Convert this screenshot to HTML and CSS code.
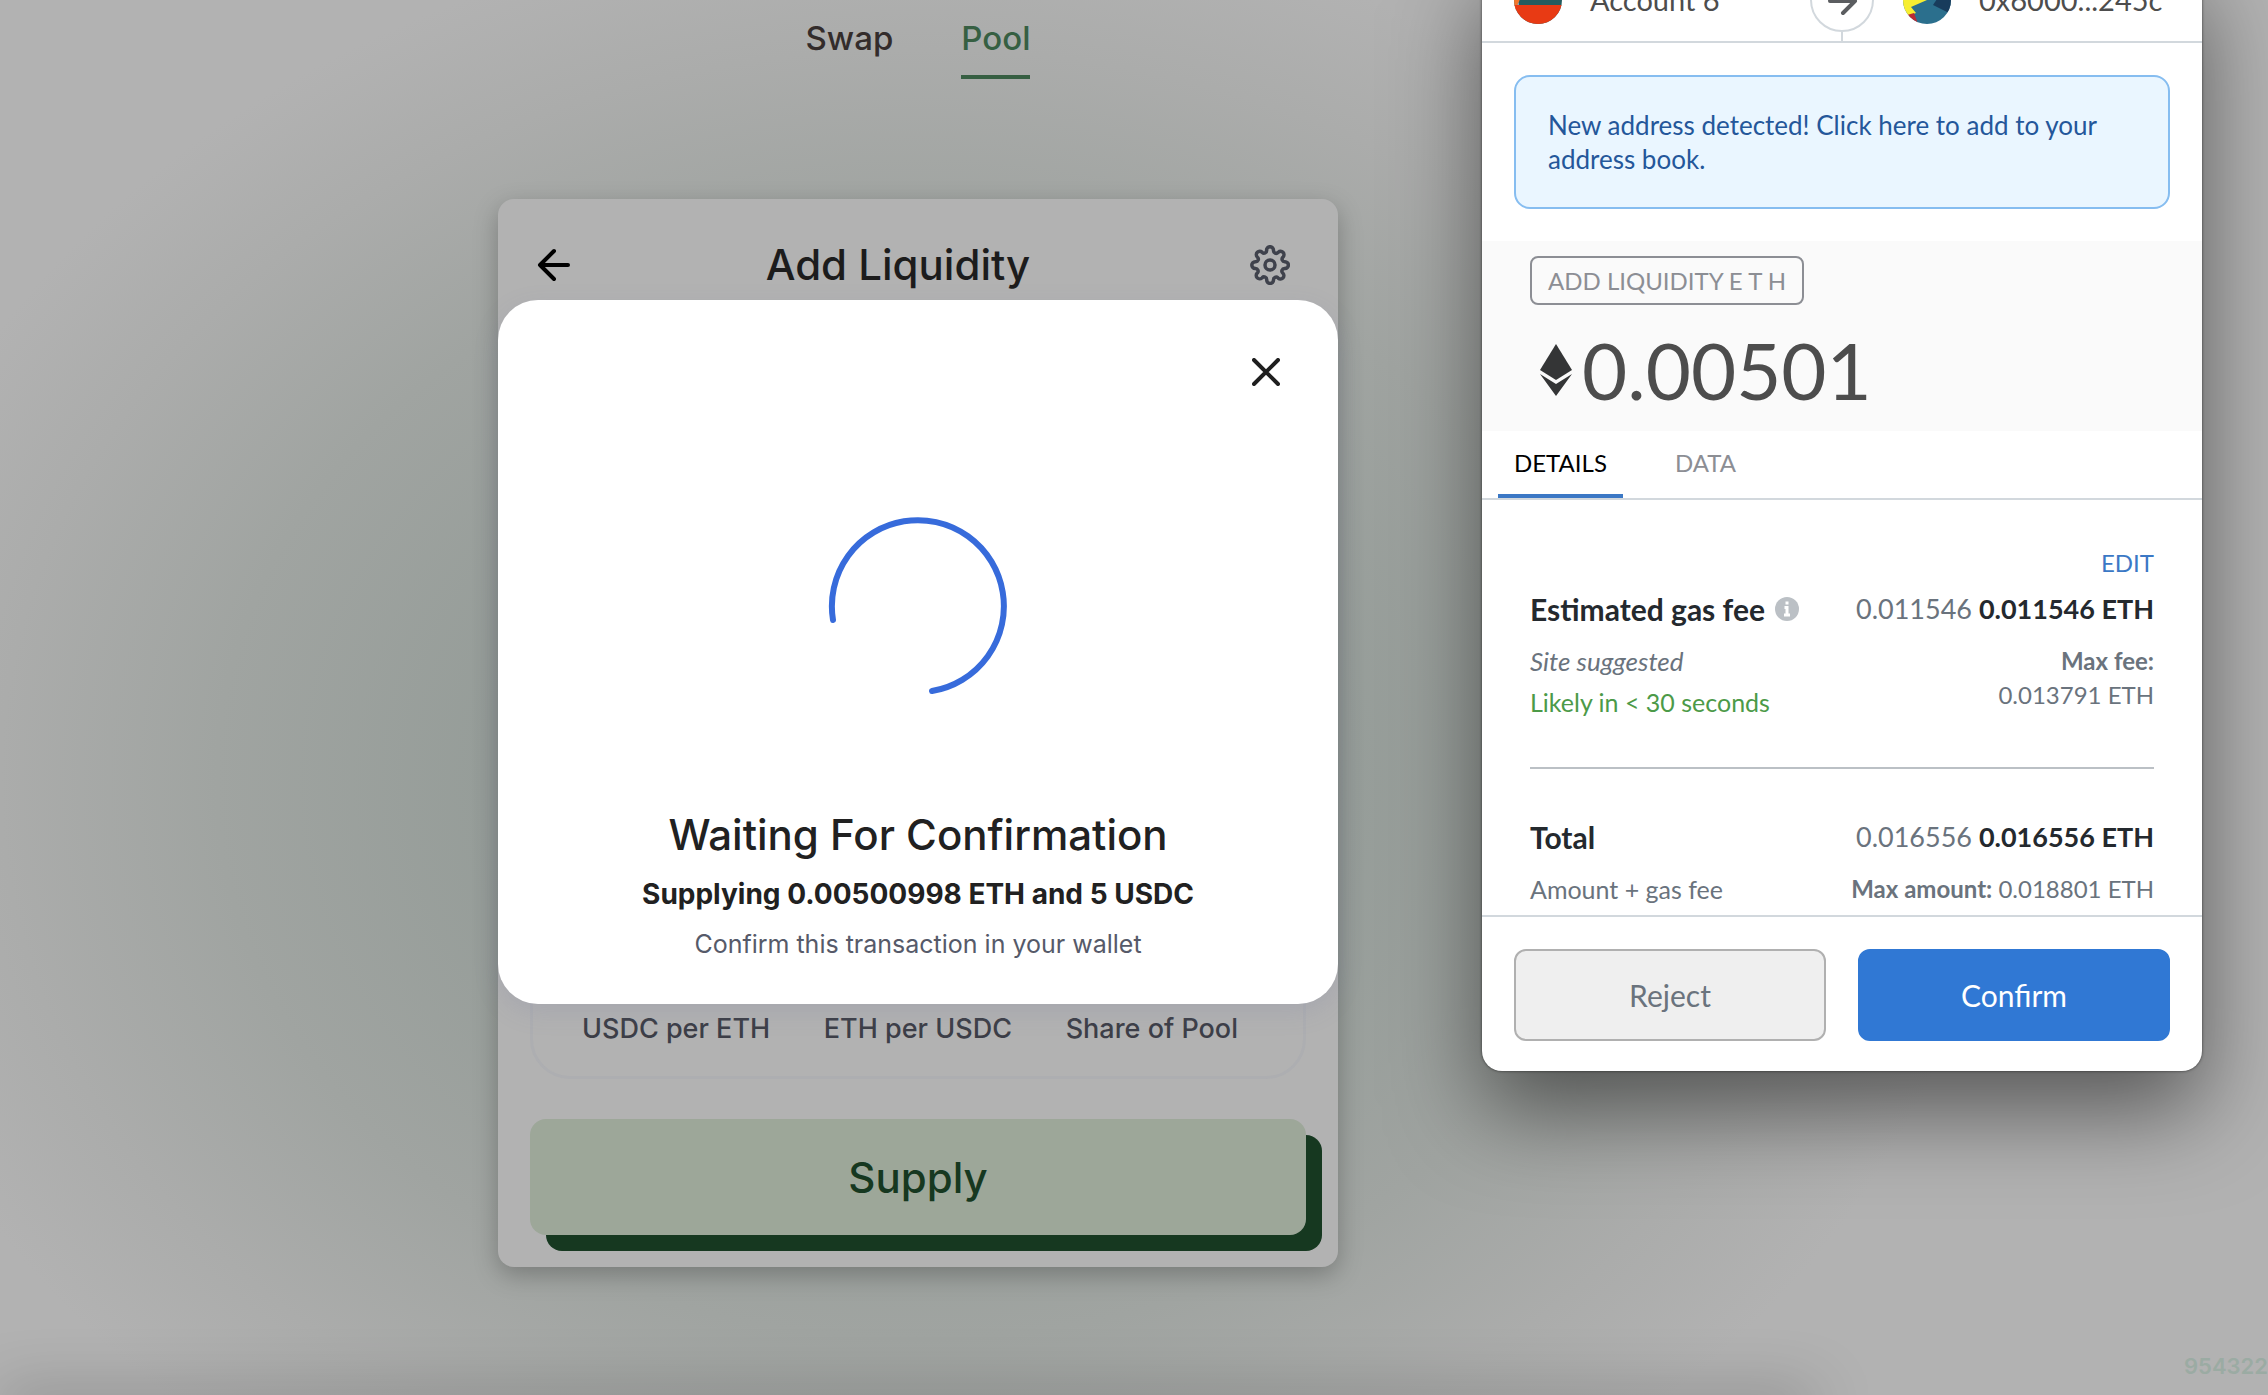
FILE: index.html
```html
<!DOCTYPE html>
<html lang="en">

<head>
  <meta charset="UTF-8" />
  <meta name="viewport" content="width=device-width, initial-scale=1.0" />
  <title>Add Liquidity</title>
  <link rel="stylesheet" href="styles.css">
</head>

<body>
  <main class="app">
    <nav class="menu">
      <a href="#swap">Swap</a>
      <a href="#pool" class="active">Pool</a>
    </nav>

    <section class="card">
      <header class="card-header">
        <button class="icon-btn back-btn" aria-label="Back">
          <svg width="48" height="48" viewBox="0 0 24 24" fill="none" stroke="#000" stroke-width="2" stroke-linecap="round" stroke-linejoin="round">
            <path d="M19 12H5M12 19l-7-7 7-7" />
          </svg>
        </button>
        <h1>Add Liquidity</h1>
        <button class="icon-btn settings-btn" aria-label="Settings">
          <svg width="40" height="40" viewBox="0 0 40 40" fill="none" stroke="#3f424c" stroke-width="3.500" stroke-linejoin="round">
            <circle cx="20" cy="20" r="5" />
            <path d="M16.500 5.200a3.500 3.500 0 0 1 7 0v.4a2.600 2.600 0 0 0 4.500 1.900l.3-.3a3.400 3.400 0 0 1 4.800 4.800l-.3.3a2.600 2.600 0 0 0 1.900 4.400h.3a3.400 3.400 0 0 1 0 6.800h-.4a2.600 2.600 0 0 0-1.900 4.500l.3.3a3.400 3.400 0 0 1-4.800 4.800l-.3-.3a2.600 2.600 0 0 0-4.400 1.900v.3a3.400 3.400 0 0 1-6.800 0v-.4a2.600 2.600 0 0 0-4.500-1.900l-.3.3a3.400 3.400 0 0 1-4.800-4.800l.3-.3a2.600 2.600 0 0 0-1.900-4.400h-.3a3.400 3.400 0 0 1 0-6.800h.4a2.600 2.600 0 0 0 1.900-4.500l-.3-.3a3.400 3.400 0 0 1 4.800-4.800l.3.3a2.600 2.600 0 0 0 4.400-1.900z" />
          </svg>
        </button>
      </header>

      <div class="fields"></div>

      <div class="prices">
        <span>USDC per ETH</span>
        <span>ETH per USDC</span>
        <span>Share of Pool</span>
      </div>

      <button class="supply-btn">Supply</button>

      <div class="modal" role="dialog" aria-labelledby="modal-title">
        <button class="icon-btn close-btn" aria-label="Close">
          <svg width="28" height="28" viewBox="0 0 28 28" stroke="#1f1f1f" stroke-width="4" stroke-linecap="round">
            <path d="M2 2l24 24M26 2L2 26" />
          </svg>
        </button>
        <svg class="spinner" width="180" height="180" viewBox="0 0 180 180" fill="none" stroke="#376bdb" stroke-width="6" stroke-linecap="round">
          <path d="M5 104A86 86 0 1 1 104 175" />
        </svg>
        <h2 id="modal-title">Waiting For Confirmation</h2>
        <p class="summary">Supplying 0.00500998 ETH and 5 USDC</p>
        <p class="hint">Confirm this transaction in your wallet</p>
      </div>
    </section>
  </main>

  <div class="block-number">9543223</div>

  <aside class="wallet">
    <header class="wallet-header">
      <div class="account">
        <svg width="48" height="48" viewBox="0 0 48 48">
          <clipPath id="c1"><circle cx="24" cy="24" r="24" /></clipPath>
          <g clip-path="url(#c1)">
            <rect width="48" height="48" fill="#235c5f" />
            <path d="M0 0h14L0 40z" fill="#f2762b" />
            <path d="M2 31l3-5v5z" fill="#8aa0b5" />
            <path d="M0 29h48v19H0z" fill="#e83a14" />
          </g>
        </svg>
        <span>Account 6</span>
      </div>
      <div class="account to">
        <svg width="48" height="48" viewBox="0 0 48 48">
          <clipPath id="c2"><circle cx="24" cy="24" r="24" /></clipPath>
          <g clip-path="url(#c2)">
            <rect width="48" height="48" fill="#2b6f8d" />
            <path d="M0 0h24v24L8 31l5 6-8 3-5 0z" fill="#f7ee31" />
            <path d="M4 39l7-2 4 11H4z" fill="#bb2a33" />
            <path d="M36 20h12v18L30 29z" fill="#183c5c" />
          </g>
        </svg>
        <span>0x6000...245c</span>
      </div>
      <div class="arrow">
        <svg width="32" height="32" viewBox="0 0 32 32" fill="none" stroke="#5b5d60" stroke-width="4" stroke-linecap="round" stroke-linejoin="round">
          <path d="M4 17h24M17 5l12 12-12 12" />
        </svg>
      </div>
    </header>

    <a href="#address-book" class="alert">New address detected! Click here to add to your address book.</a>

    <div class="amount-area">
      <span class="action">ADD LIQUIDITY E T H</span>
      <div class="amount">
        <svg width="32" height="52" viewBox="0 0 32 52" fill="#343536">
          <path d="M16 0l16 26-16 10L0 26z" />
          <path d="M0 30l16 10 16-10-16 22z" />
        </svg>
        <span>0.00501</span>
      </div>
    </div>

    <div class="tabs">
      <button class="tab selected">DETAILS</button>
      <button class="tab">DATA</button>
    </div>

    <div class="details">
      <button class="edit-btn">EDIT</button>
      <div class="row main-row">
        <span class="label">Estimated gas fee
          <svg width="24" height="24" viewBox="0 0 24 24">
            <circle cx="12" cy="12" r="12" fill="#bbc0c5" />
            <path d="M12 4.500v3M9.500 10.500h2.500v7M9 18h6" stroke="#fff" stroke-width="3" fill="none" />
          </svg>
        </span>
        <span class="value">0.011546 <b>0.011546 ETH</b></span>
      </div>
      <div class="row">
        <div>
          <i>Site suggested</i>
          <div class="likely">Likely in &lt; 30 seconds</div>
        </div>
        <div class="value"><b>Max fee:</b><br>0.013791 ETH</div>
      </div>
      <hr>
      <div class="row main-row">
        <span class="label">Total</span>
        <span class="value">0.016556 <b>0.016556 ETH</b></span>
      </div>
      <div class="row">
        <span>Amount + gas fee</span>
        <span class="value"><b>Max amount:</b> 0.018801 ETH</span>
      </div>
    </div>

    <footer class="wallet-footer">
      <button class="reject-btn">Reject</button>
      <button class="confirm-btn">Confirm</button>
    </footer>
  </aside>
</body>

</html>
```

FILE: styles.css
```css
* {
  box-sizing: border-box;
}

body {
  margin: 0;
  position: relative;
  min-height: 100vh;
  overflow: hidden;
  font-family: Inter, "Open Sans", sans-serif;
  background: radial-gradient(ellipse 1080px 860px at 40.5% 780px, #8f9894 0%, #969d99 40%, #a0a4a1 65%, #abacab 85%, #b2b2b2 100%) #b2b2b2;
}

/* soft shade along the bottom edge */
body::after {
  content: "";
  position: absolute;
  left: 0;
  bottom: -20px;
  width: 80%;
  height: 20px;
  box-shadow: 0 0 60px rgba(0, 0, 0, 0.35);
}

h1,
h2,
p {
  margin: 0;
}

button {
  border: none;
  background: none;
  padding: 0;
  font-family: inherit;
}

svg {
  display: block;
  flex: none;
}

.app {
  display: flex;
  flex-direction: column;
  align-items: center;
  padding: 14px 432px 0 0;
}

.menu {
  display: flex;
  gap: 68px;
  margin-bottom: 120px;
}

.menu a {
  padding-bottom: 13px;
  border-bottom: 4px solid transparent;
  font-size: 33px;
  font-weight: 500;
  line-height: 48px;
  color: #332c2b;
  text-decoration: none;
}

.menu a.active {
  color: #365f42;
  border-color: #365f42;
}

.card {
  position: relative;
  display: flex;
  flex-direction: column;
  width: 840px;
  max-width: 100%;
  min-height: 1068px;
  padding: 34px 32px 32px;
  border-radius: 16px;
  background-color: #b2b2b2;
  box-shadow: 0 8px 24px rgba(0, 0, 0, 0.25);
}

.card-header {
  display: flex;
  justify-content: space-between;
  align-items: center;
  padding-right: 16px;
}

.card-header h1 {
  font-size: 42px;
  font-weight: 500;
  line-height: 64px;
  color: #1c1c1c;
}

.settings-btn {
  padding-left: 32px;
}

.fields {
  flex: 1;
}

.prices {
  display: flex;
  justify-content: space-between;
  padding: 60px 65px 27px 49px;
  border: 3px solid #adaeb1;
  border-radius: 40px;
  font-size: 27px;
  font-weight: 500;
  line-height: 40px;
  color: #3c3e47;
}

.supply-btn {
  height: 116px;
  margin-top: 40px;
  border-radius: 16px;
  font-size: 42px;
  font-weight: 500;
  color: #163820;
  background-color: #9da799;
  box-shadow: 16px 16px 0 #163820;
}

.modal {
  position: absolute;
  top: 101px;
  left: 0;
  right: 0;
  display: flex;
  flex-direction: column;
  align-items: center;
  padding: 58px 58px 41px;
  border-radius: 40px;
  background-color: #ffffff;
  box-shadow: 0 8px 24px rgba(120, 125, 160, 0.2);
  text-align: center;
}

.close-btn {
  align-self: flex-end;
}

.spinner {
  margin-top: 130px;
}

.modal h2 {
  margin-top: 109px;
  font-size: 42px;
  font-weight: 500;
  line-height: 60px;
  color: #212121;
}

.summary {
  margin-top: 8px;
  font-size: 28px;
  font-weight: 700;
  line-height: 42px;
  color: #212121;
}

.hint {
  margin-top: 10px;
  font-size: 25px;
  line-height: 38px;
  color: #565a69;
}

.block-number {
  position: absolute;
  right: -14px;
  bottom: 14px;
  font-size: 22px;
  font-weight: 600;
  line-height: 30px;
  color: #9baba3;
}

/* wallet popup */
.wallet {
  position: absolute;
  top: -42px;
  right: 66px;
  width: 720px;
  border-radius: 20px;
  background-color: #ffffff;
  box-shadow: 0 0 3px rgba(0, 0, 0, 0.6), 0 40px 90px rgba(0, 0, 0, 0.5);
  font-family: Lato, "Open Sans", sans-serif;
  font-size: 25px;
  line-height: 34px;
  color: #6a737d;
}

.wallet-header {
  position: relative;
  display: flex;
  height: 85px;
  padding: 0 32px;
  border-bottom: 2px solid #d2d8dd;
}

.account {
  width: 50%;
  display: flex;
  align-items: center;
  gap: 28px;
  font-size: 29px;
  color: #4d4d4d;
}

.account.to {
  padding-left: 61px;
}

.arrow {
  position: absolute;
  top: 10px;
  left: 50%;
  display: flex;
  align-items: center;
  justify-content: center;
  width: 64px;
  height: 64px;
  margin-left: -32px;
  border: 2px solid #d2d8dd;
  border-radius: 50%;
}

.arrow::after {
  content: "";
  position: absolute;
  top: 62px;
  width: 2px;
  height: 10px;
  background-color: #d2d8dd;
}

.alert {
  display: block;
  margin: 32px;
  padding: 31px 32px;
  border: 2px solid #86bdf0;
  border-radius: 16px;
  background-color: #eaf6ff;
  font-size: 26px;
  color: #24579a;
  text-decoration: none;
}

.amount-area {
  padding: 15px 48px 16px;
  background-color: #fafafa;
}

.action {
  display: inline-block;
  padding: 0 16px;
  border: 2px solid #8c8e94;
  border-radius: 8px;
  font-size: 24px;
  line-height: 45px;
  color: #8c8e94;
}

.amount {
  display: flex;
  align-items: center;
  gap: 10px;
  margin-top: 20px;
  padding-left: 10px;
  font-size: 78px;
  line-height: 90px;
  color: #4d4d4d;
}

.tabs {
  display: flex;
  gap: 36px;
  padding: 0 16px;
  border-bottom: 2px solid #d2d8dd;
}

.tab {
  height: 67px;
  padding: 0 16px;
  border-bottom: 4px solid transparent;
  font-size: 24px;
  color: #8c8e94;
}

.tab.selected {
  color: #000000;
  border-color: #3b78c5;
}

.details {
  padding: 43px 48px 9px;
}

.edit-btn {
  display: block;
  margin-left: auto;
  font-size: 24px;
  line-height: 40px;
  color: #3b78c5;
}

.row {
  display: flex;
  justify-content: space-between;
  margin-top: 11px;
}

.row i {
  font-size: 26px;
}

.value {
  font-size: 24px;
  text-align: right;
}

.main-row {
  margin-top: 2px;
  line-height: 48px;
}

.main-row .label {
  display: flex;
  align-items: center;
  gap: 10px;
  font-size: 30px;
  font-weight: 700;
  color: #24292e;
}

.main-row .value {
  font-size: 27px;
}

.main-row b {
  color: #24292e;
}

.likely {
  margin-top: 7px;
  color: #4c9a48;
}

hr {
  margin: 48px 0 44px;
  border: none;
  border-top: 2px solid #bbc0c5;
}

.wallet-footer {
  display: flex;
  gap: 32px;
  padding: 32px 32px 30px;
  border-top: 2px solid #d2d8dd;
}

.wallet-footer button {
  flex: 1;
  height: 92px;
  border: 2px solid #b0b0b0;
  border-radius: 12px;
  font-size: 30px;
}

.reject-btn {
  background-color: #efefef;
  color: #6a737d;
}

.wallet-footer .confirm-btn {
  border-color: #3078d4;
  background-color: #3078d4;
  color: #ffffff;
}
```
